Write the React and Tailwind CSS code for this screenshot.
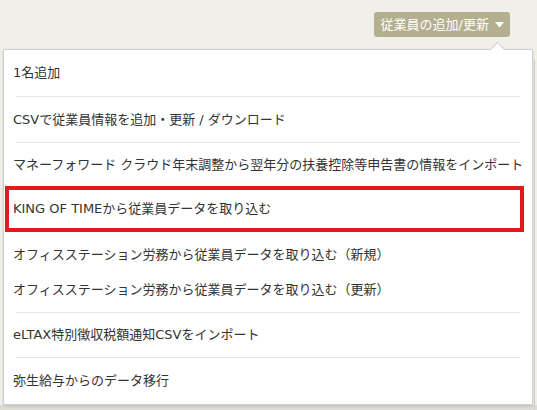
import React from "react";

const font = {
  fontFamily: '"DejaVu Sans", "Noto Sans CJK JP", sans-serif',
};

const Divider = () => <div className="h-px mx-[12px] bg-[#e6e6e6]" />;

const Item = ({ children, className = "" }) => (
  <div className={`flex items-center pl-[9px] text-[13px] text-[#333] ${className}`}>
    {children}
  </div>
);

export default function App() {
  return (
    <div
      className="relative w-[537px] h-[410px] bg-[#f0efea] overflow-hidden"
      style={font}
    >
      {/* things behind the menu */}
      <div className="absolute left-0 right-0 top-[405px] h-[6px] bg-[#dcdcd5]" />
      <div className="absolute right-[2px] top-[60px] bottom-0 w-px bg-[#d2d1c9]" />

      <div className="flex justify-end pt-[12px] pr-[27px]">
        <button className="flex items-center gap-[6px] h-[25px] pl-[7px] pr-[6px] rounded-[3px] bg-[#b4af8f] text-white text-[13px] leading-none">
          <span>従業員の追加/更新</span>
          <svg width="9" height="6" viewBox="0 0 9 6">
            <path d="M0 0 L9 0 L4.5 5.5 Z" fill="#fff" />
          </svg>
        </button>
      </div>

      <div className="absolute left-[3px] top-[49px] w-[530px] h-[356px] bg-white border border-[#cfcfcf] rounded-[2px] shadow-[0_1px_3px_rgba(0,0,0,0.15)]">
        <div className="absolute -top-[6px] left-[488px] w-[11px] h-[11px] rotate-45 bg-white border-l border-t border-[#cfcfcf]" />
        <div className="relative flex flex-col">
          <Item className="h-[46px]">1名追加</Item>
          <Divider />
          <Item className="h-[45px]">CSVで従業員情報を追加・更新 / ダウンロード</Item>
          <Divider />
          <Item className="h-[43px]">
            マネーフォワード クラウド年末調整から翌年分の扶養控除等申告書の情報をインポート
          </Item>
          <div className="h-[46px] ml-[1px] mr-[8px] border-4 border-[#e3191e] flex items-center pl-[4px] text-[13px] text-[#333]">
            KING OF TIMEから従業員データを取り込む
          </div>
          <div className="flex flex-col gap-[15px] pt-[13px] pb-[12px] pl-[9px] text-[13px] leading-[20px] text-[#333]">
            <div>オフィスステーション労務から従業員データを取り込む（新規）</div>
            <div>オフィスステーション労務から従業員データを取り込む（更新）</div>
          </div>
          <Divider />
          <Item className="h-[44px]">eLTAX特別徴収税額通知CSVをインポート</Item>
          <Divider />
          <Item className="h-[45px]">弥生給与からのデータ移行</Item>
        </div>
      </div>
    </div>
  );
}
